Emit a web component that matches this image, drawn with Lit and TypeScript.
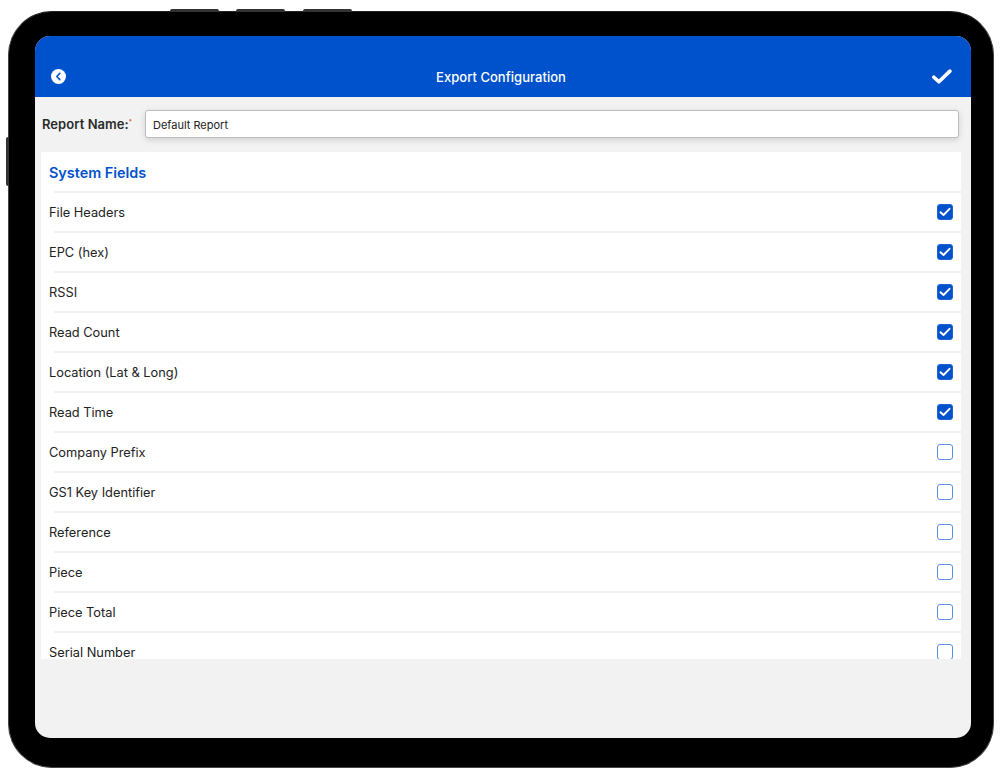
import { LitElement, html, css, svg } from "lit";
import { customElement } from "lit/decorators.js";

const FIELDS: [string, boolean][] = [
  ["File Headers", true],
  ["EPC (hex)", true],
  ["RSSI", true],
  ["Read Count", true],
  ["Location (Lat & Long)", true],
  ["Read Time", true],
  ["Company Prefix", false],
  ["GS1 Key Identifier", false],
  ["Reference", false],
  ["Piece", false],
  ["Piece Total", false],
  ["Serial Number", false],
];

@customElement("app-root")
export class AppRoot extends LitElement {
  static styles = css`
    :host {
      display: block;
      width: 1000px;
      height: 774px;
      background: #fff;
      font-family: Inter, "Liberation Sans", sans-serif;
      overflow: hidden;
      padding: 11px 6px 6px 8px;
      box-sizing: border-box;
    }
    .device {
      position: relative;
      width: 986px;
      height: 757px;
      box-sizing: border-box;
      background: #000;
      border: 1px solid #444;
      border-top-color: #222;
      border-radius: 44px;
      padding: 24px 22px 29px 26px;
    }
    .hw {
      position: absolute;
      background: #333;
    }
    .hw.top {
      top: -3px;
      width: 49px;
      height: 3px;
      border-radius: 2px 2px 0 0;
    }
    .hw.t1 { left: 161px; }
    .hw.t2 { left: 227px; }
    .hw.t3 { left: 294px; }
    .hw.side {
      left: -3px;
      top: 125px;
      width: 3px;
      height: 49px;
      border-radius: 2px 0 0 2px;
    }
    .screen {
      height: 100%;
      background: #f2f2f2;
      border-radius: 15px;
      overflow: hidden;
      display: flex;
      flex-direction: column;
    }
    .header {
      flex: none;
      height: 61px;
      box-sizing: border-box;
      background: #0052cc;
      color: #fff;
      display: flex;
      align-items: flex-end;
      justify-content: space-between;
      padding: 0 19px 10px 16px;
      position: relative;
    }
    .title {
      position: absolute;
      left: 0;
      right: 4px;
      bottom: 12px;
      text-align: center;
      font-size: 13px;
      line-height: 16px;
      font-weight: 500;
      letter-spacing: 0.04px;
    }
    .back { display: block; margin-bottom: 3px; }
    .done { display: block; margin-bottom: 3px; }
    .name-row {
      flex: none;
      display: flex;
      align-items: center;
      padding: 13px 12px 14px 7px;
    }
    .name-label {
      width: 103px;
      flex: none;
      font-size: 13px;
      font-weight: 600;
      color: #2b2b2b;
      white-space: nowrap;
      letter-spacing: 0.05px;
    }
    .req {
      color: #e02020;
      font-size: 6px;
      vertical-align: 5px;
      line-height: 0;
    }
    .input {
      flex: 1;
      height: 28px;
      box-sizing: border-box;
      background: #fff;
      border: 1px solid #bdbdbd;
      border-radius: 3px;
      box-shadow: 0 2px 6px rgba(0, 0, 0, 0.14);
      font-size: 11px;
      line-height: 28px;
      padding-left: 7px;
      color: #222;
    }
    .card {
      margin: 0 10px 0 6px;
      height: 507px;
      background: #fff;
      overflow: hidden;
    }
    .section {
      height: 39px;
      box-sizing: border-box;
      padding-left: 8px;
      font-size: 14.4px;
      line-height: 41px;
      font-weight: 600;
      color: #0052cc;
    }
    .row {
      height: 40px;
      box-sizing: border-box;
      display: flex;
      align-items: center;
      justify-content: space-between;
      padding: 0 8px;
      position: relative;
      border-top: 2px solid transparent;
      font-size: 12.8px;
      color: #222;
    }
    .row::before {
      content: "";
      position: absolute;
      left: 13px;
      right: 0;
      top: -2px;
      height: 2px;
      background: #f0f0f0;
    }
    .box {
      width: 16px;
      height: 16px;
      box-sizing: border-box;
      border-radius: 3px;
      border: 1.5px solid #5b8fe0;
      background: #fff;
      display: flex;
      align-items: center;
      justify-content: center;
    }
    .box.on {
      background: #0052cc;
      border-color: #1a62d4;
    }
  `;

  render() {
    return html`
      <div class="device">
        <div class="hw top t1"></div>
        <div class="hw top t2"></div>
        <div class="hw top t3"></div>
        <div class="hw side"></div>
        <div class="screen">
          <div class="header">
            <svg class="back" width="15" height="15" viewBox="0 0 15 15">
              <circle cx="7.5" cy="7.5" r="7.5" fill="#fff" />
              <path d="M8.8 4.4 5.8 7.5l3 3.1" fill="none" stroke="#0052cc" stroke-width="1.6" stroke-linecap="round" stroke-linejoin="round" />
            </svg>
            <div class="title">Export Configuration</div>
            <svg class="done" width="20" height="15" viewBox="0 0 20 15">
              <path d="M1.9 8.2l5 4.6L17.9 2.1" fill="none" stroke="#fff" stroke-width="3.6" stroke-linecap="round" stroke-linejoin="round" />
            </svg>
          </div>
          <div class="name-row">
            <div class="name-label">Report Name:<span class="req">*</span></div>
            <div class="input">Default Report</div>
          </div>
          <div class="card">
            <div class="section">System Fields</div>
            ${FIELDS.map(
              ([label, on]) => html`
                <div class="row">
                  <span>${label}</span>
                  <span class="box ${on ? "on" : ""}">
                    ${on
                      ? svg`<svg width="12" height="10" viewBox="0 0 12 10"><path d="M1.5 5.2l3 2.8 6-6.2" fill="none" stroke="#fff" stroke-width="1.9" stroke-linecap="round" stroke-linejoin="round"/></svg>`
                      : ""}
                  </span>
                </div>
              `
            )}
          </div>
        </div>
      </div>
    `;
  }
}
